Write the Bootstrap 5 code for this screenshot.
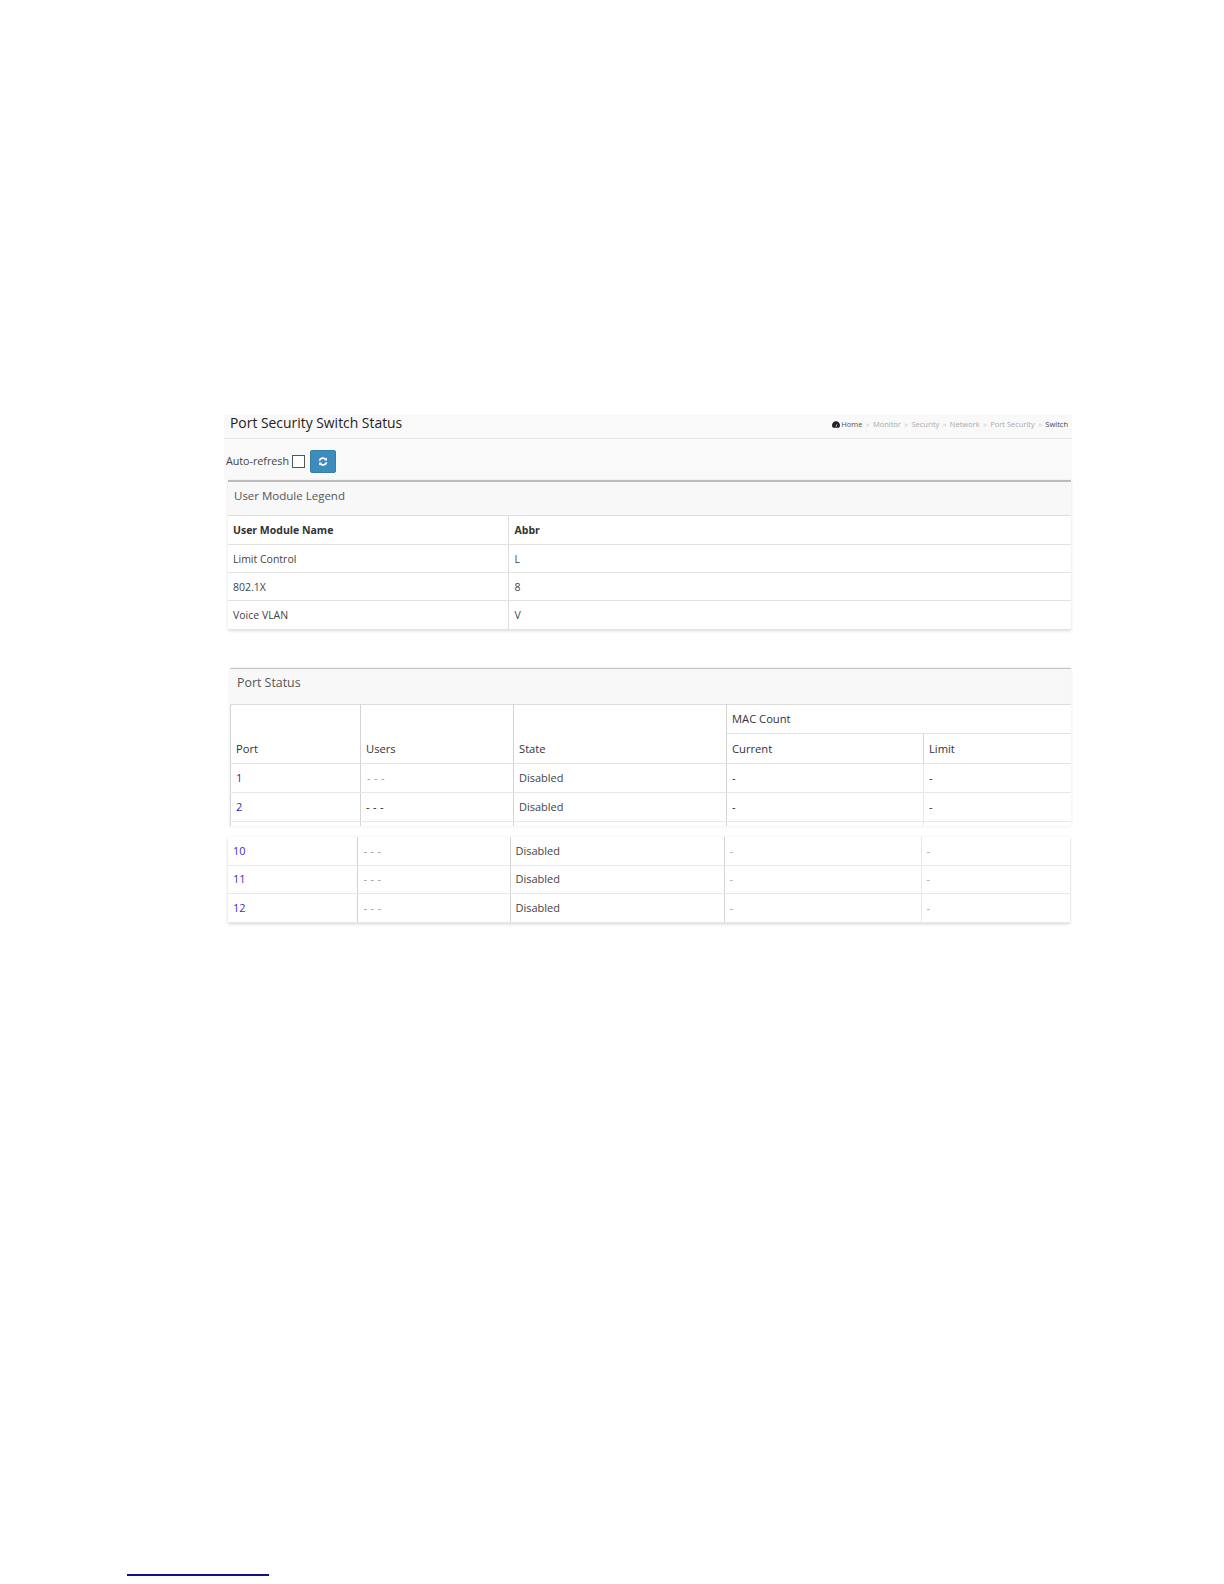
<!DOCTYPE html>
<html lang="en">
<head>
<meta charset="utf-8">
<title>Port Security Switch Status</title>
<link href="https://cdn.jsdelivr.net/npm/bootstrap@5.3.0/dist/css/bootstrap.min.css" rel="stylesheet">
<style>
html,body{background:#fff;height:1584px;overflow:hidden}
body{font-family:"Open Sans","Noto Sans","Liberation Sans",sans-serif;font-size:11px;color:#444}
.sheet{padding:414px 0 0 224px;width:848px;box-sizing:content-box;height:1170px;position:relative}
.title-band{height:25px;background:#f9f9f9;border-bottom:1px solid #e8e8e8;padding:0 4px 8px 6px}
.title-band h1{font-size:13.9px;font-weight:400;color:#222;margin:0;line-height:10px;padding-top:1px}
.crumbs{font-size:7.5px;color:#aaa;gap:3.4px;padding-top:5px}
.crumbs .sep{color:#ccc}
.crumbs .here{color:#444}
.crumbs .start{color:#555;gap:1px}
.tool-band{height:41px;background:#f9f9f9;gap:3px;padding:3px 0 0 2px;font-size:10.7px;color:#444}
.tick{width:13px;height:13px;border:1px solid #555;background:#fff;margin:1px 2px 0 0;display:block;appearance:none;flex:none}
.sync-btn{width:26px;height:23px;padding:0;background:#3c8dbc;border:1px solid #367fa9;border-radius:2px;line-height:1}
.sync-btn:hover{background:#3c8dbc;border-color:#367fa9}
.panel-a{margin-left:4px;margin-right:1px;box-shadow:0 1px 3px rgba(0,0,0,.14)}
.panel-a.first{border-top:2px solid #bbb}
.panel-b{margin-top:38px;margin-left:6px;margin-right:1px;border-top:1px solid #c4c4c4;box-shadow:0 0 3px rgba(0,0,0,.1)}
.panel-head{background:#f8f8f8;font-size:11.5px;color:#555;padding-left:6px;height:33px;line-height:17px;padding-top:5px}
.panel-b .panel-head{height:35px;padding-left:7px;padding-top:3px;line-height:22px;font-size:12.4px}
.grid-t{table-layout:fixed;width:100%;margin:0;border-collapse:collapse;background:#fff;--bs-table-bg:transparent;color:#444}
.grid-t th,.grid-t td{border:1px solid #ddd;padding:0 5px;vertical-align:middle;font-size:10.5px;line-height:14px;height:28.2px;font-weight:400;border-bottom-color:#e2e2e2;color:#444}
.grid-t th{color:#333}
.legend-t th{font-weight:700;height:29px}
.legend-t tr>*:nth-child(2){padding-left:6px}
.legend-t tr>*:first-child,.ports-t tr>*:first-child{border-left:0}
.legend-t tr>*:last-child,.ports-t tr>*:last-child{border-right:0}
.ports-wrap .ports-t tr>*:first-child{border-left:1px solid #d4d4d4}
.ports-t th,.ports-t td{font-size:11px;height:29px}
.ports-t th{font-size:11.2px}
.ports-t tr.low th{height:30px;padding-top:1px}
.ports-t td{border-color:#e8e8e8}
.ports-t td:nth-child(-n+3),.ports-t th:nth-child(-n+3){border-left-color:#d4d4d4;border-right-color:#d4d4d4}
.ports-t th.tall{vertical-align:bottom;padding-bottom:7px}
.ports-t tr.stub td{height:5px;padding:0;line-height:0;font-size:0;border-bottom:0;border-top:1px solid #d6d6d6}
.ports-t a{color:#2a1fc4;text-decoration:none}
.grid-t td.dim{color:#999;letter-spacing:.3px;padding-left:6px}
.grid-t td.ink{color:#222;letter-spacing:.3px}
.grid-t td.faint{color:#aaa}
.frag{margin-top:11px;margin-left:4px;margin-right:2px;box-shadow:0 1px 3px rgba(0,0,0,.18)}
.frag .ports-t td{height:28.7px}
.frag .ports-t tr:first-child td{border-top:0;height:28px}
.frag .ports-t a{color:#3d2fc9}
.foot-rule{position:absolute;left:127px;top:1574px;width:142px;height:2px;background:#10108a}
</style>
</head>
<body>
<main class="sheet">
  <header class="title-band d-flex justify-content-between align-items-center">
    <h1>Port Security Switch Status</h1>
    <nav class="crumbs d-flex align-items-center">
      <span class="start d-flex align-items-center">
        <svg width="8" height="7" viewBox="0 0 8 7" aria-hidden="true"><path d="M4 .3A3.9 3.9 0 0 0 0 4.2C0 5.2.4 6.1 1 6.8H7C7.6 6.1 8 5.2 8 4.2A3.9 3.9 0 0 0 4 .3Z" fill="#222"/><path d="M3.5 5.2 5.6 2.2 4.5 5.6Z" fill="#fff"/></svg>Home</span>
      <span class="sep">&#187;</span><span>Monitor</span>
      <span class="sep">&#187;</span><span>Security</span>
      <span class="sep">&#187;</span><span>Network</span>
      <span class="sep">&#187;</span><span>Port Security</span>
      <span class="sep">&#187;</span><span class="here">Switch</span>
    </nav>
  </header>

  <div class="tool-band d-flex align-items-center">
    <label for="auto">Auto-refresh</label>
    <input id="auto" type="checkbox" class="tick">
    <button type="button" class="btn sync-btn d-flex align-items-center justify-content-center" aria-label="Refresh">
      <svg width="10" height="9" viewBox="0 0 10 9" aria-hidden="true" fill="none" stroke="#fff" stroke-width="1.7"><path d="M1.4 3.6A3.7 3.7 0 0 1 7.7 2.4"/><path d="M8.6 5.4A3.7 3.7 0 0 1 2.3 6.6"/><path d="M9 .6V3.4H6.2Z" fill="#fff" stroke="none"/><path d="M1 8.4V5.6H3.8Z" fill="#fff" stroke="none"/></svg>
    </button>
  </div>

  <section class="panel-a first">
    <div class="panel-head">User Module Legend</div>
    <table class="table grid-t legend-t">
      <colgroup><col style="width:280px"><col></colgroup>
      <thead><tr><th>User Module Name</th><th>Abbr</th></tr></thead>
      <tbody>
        <tr><td>Limit Control</td><td>L</td></tr>
        <tr><td>802.1X</td><td>8</td></tr>
        <tr><td>Voice VLAN</td><td>V</td></tr>
      </tbody>
    </table>
  </section>

  <section class="panel-b">
    <div class="panel-head">Port Status</div>
    <div class="ports-wrap">
      <table class="table grid-t ports-t">
        <colgroup><col style="width:130px"><col style="width:153px"><col style="width:213px"><col style="width:197px"><col></colgroup>
        <thead>
          <tr><th rowspan="2" class="tall">Port</th><th rowspan="2" class="tall">Users</th><th rowspan="2" class="tall">State</th><th colspan="2">MAC Count</th></tr>
          <tr class="low"><th>Current</th><th>Limit</th></tr>
        </thead>
        <tbody>
          <tr><td><a href="#">1</a></td><td class="dim">- - -</td><td>Disabled</td><td class="ink">-</td><td class="ink">-</td></tr>
          <tr><td><a href="#">2</a></td><td class="ink">- - -</td><td>Disabled</td><td class="ink">-</td><td class="ink">-</td></tr>
          <tr class="stub"><td></td><td></td><td></td><td></td><td></td></tr>
        </tbody>
      </table>
    </div>
  </section>

  <section class="frag">
    <table class="table grid-t ports-t">
      <colgroup><col style="width:129px"><col style="width:153px"><col style="width:214px"><col style="width:197px"><col></colgroup>
      <tbody>
        <tr><td><a href="#">10</a></td><td class="dim">- - -</td><td>Disabled</td><td class="faint">-</td><td class="faint">-</td></tr>
        <tr><td><a href="#">11</a></td><td class="dim">- - -</td><td>Disabled</td><td class="faint">-</td><td class="faint">-</td></tr>
        <tr><td><a href="#">12</a></td><td class="dim">- - -</td><td>Disabled</td><td class="faint">-</td><td class="faint">-</td></tr>
      </tbody>
    </table>
  </section>
  <div class="foot-rule"></div>
</main>
<script src="https://cdn.jsdelivr.net/npm/bootstrap@5.3.0/dist/js/bootstrap.bundle.min.js"></script>
</body>
</html>
